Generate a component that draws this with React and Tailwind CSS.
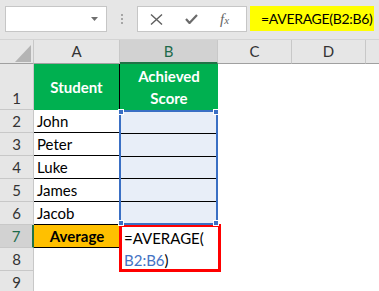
import React from "react";

const NAMES = ["John", "Peter", "Luke", "James", "Jacob"];
const HEADERS = ["A", "B", "C", "D"];

const headCell =
  "bg-[#e6e6e6] border-r border-b border-r-[#c8c8c8] border-b-[#a0a0a0] flex items-center justify-center text-[15px] text-[#333]";

const rowHead =
  "col-start-1 bg-[#e6e6e6] border-r border-b border-[#c8c8c8] flex items-end justify-center pb-[1px] text-[15px] text-[#333] leading-[20px]";

function Handle({ pos }) {
  return <span className={`absolute w-[6px] h-[6px] bg-[#3a6fc4] border border-white ${pos}`} />;
}

export default function App() {
  return (
    <div className="w-[379px] h-[291px] overflow-hidden bg-white font-['Lato',sans-serif]">
      {/* formula bar */}
      <div className="h-10 bg-[#e6e6e6] flex items-start pt-[6px] pl-[5px] border-b border-[#d4d4d4]">
        <div className="w-[102px] h-[26px] bg-white border border-[#c6c6c6] flex items-center justify-end pr-[8px]">
          <svg width="7" height="4" viewBox="0 0 7 4">
            <path d="M0 0h7L3.5 4z" fill="#6f6f6f" />
          </svg>
        </div>
        <div className="w-[30px] h-[26px] flex flex-col items-center justify-center gap-[2px]">
          <span className="w-[2px] h-[2px] bg-[#a6a6a6]" />
          <span className="w-[2px] h-[2px] bg-[#a6a6a6]" />
          <span className="w-[2px] h-[2px] bg-[#a6a6a6]" />
        </div>
        <div className="w-[110px] h-[26px] bg-white border border-[#c6c6c6] flex items-center pl-[12px] gap-[22px]">
          <svg width="13" height="11" viewBox="0 0 13 11">
            <path d="M1 0.5l11 10M12 0.5l-11 10" stroke="#5f5f5f" strokeWidth="1.4" fill="none" />
          </svg>
          <svg width="13" height="10" viewBox="0 0 13 10">
            <path d="M1 5l3.5 4L12 1" stroke="#6b6b6b" strokeWidth="2.2" fill="none" />
          </svg>
          <span className="font-['Liberation_Serif',serif] italic text-[15px] text-[#666] leading-none">
            f<span className="text-[11px]">x</span>
          </span>
        </div>
        <div className="ml-[3px] w-[124px] h-[25px] bg-[#ffff00] flex items-center pl-[11px] text-[14px] tracking-[-0.3px] whitespace-nowrap text-black">
          =AVERAGE(B2:B6)
        </div>
      </div>

      {/* sheet */}
      <div className="grid grid-cols-[34px_86px_98px_74px_74px_13px] grid-rows-[24px_46px_repeat(8,23px)]">
        {/* corner */}
        <div className="bg-[#e6e6e6] border-r border-b border-r-[#c8c8c8] border-b-[#a0a0a0] relative">
          <svg className="absolute left-[15px] top-[5px]" width="16" height="17" viewBox="0 0 16 17">
            <path d="M16 0v17H0z" fill="#b4b4b4" />
          </svg>
        </div>
        {HEADERS.map((h) =>
          h === "B" ? (
            <div
              key={h}
              className="bg-[#d2d2d2] border-r border-r-[#c8c8c8] border-b-2 border-b-[#217346] flex items-center justify-center text-[15px] text-[#1d6a4a]"
            >
              {h}
            </div>
          ) : (
            <div key={h} className={headCell}>
              {h}
            </div>
          )
        )}
        <div className="bg-[#e6e6e6] border-b border-b-[#a0a0a0]" />

        {/* row headers */}
        {[1, 2, 3, 4, 5, 6, 7, 8, 9].map((n) =>
          n === 7 ? (
            <div
              key={n}
              className="col-start-1 row-start-8 bg-[#d2d2d2] border-r-2 border-r-[#217346] border-b border-b-[#c8c8c8] flex items-end justify-center pb-[1px] text-[15px] text-[#1d6a4a] leading-[20px]"
            >
              7
            </div>
          ) : (
            <div key={n} className={rowHead} style={{ gridRowStart: n + 1 }}>
              {n}
            </div>
          )
        )}

        {/* row 1 */}
        <div className="col-start-2 row-start-2 bg-[#00b050] border-r border-black flex items-center justify-center text-white font-bold text-[15px]">
          Student
        </div>
        <div className="col-start-3 row-start-2 bg-[#00b050] flex items-center justify-center text-center text-white font-bold text-[15px] leading-[22px]">
          Achieved
          <br />
          Score
        </div>

        {/* names */}
        {NAMES.map((name, i) => (
          <div
            key={name}
            className="col-start-2 border-b border-r border-black flex items-center pl-[3px] text-[15px] text-black"
            style={{ gridRowStart: i + 3 }}
          >
            {name}
          </div>
        ))}

        {/* selection B2:B6 */}
        <div className="col-start-3 row-start-3 row-span-5 relative -ml-px border-2 border-[#3a6fc4] bg-[#e8eef8] flex flex-col">
          {[0, 1, 2, 3, 4].map((i) => (
            <div key={i} className={i < 4 ? "flex-1 border-b border-black" : "flex-1"} />
          ))}
          <Handle pos="-top-[3px] -left-[3px]" />
          <Handle pos="-top-[3px] -right-[3px]" />
          <Handle pos="-bottom-[3px] -left-[3px]" />
          <Handle pos="-bottom-[3px] -right-[3px]" />
        </div>

        {/* row 7 */}
        <div className="col-start-2 row-start-8 bg-[#ffc000] border-b border-black flex items-center justify-center font-bold text-[15px] text-black">
          Average
        </div>
        <div className="col-start-3 row-start-8 row-span-2 -ml-px -mr-[3px] -mt-px -mb-px border-[3px] border-[#ff0000] bg-white pl-[2px] text-[15px] leading-[22px] text-black">
          =AVERAGE(
          <br />
          <span className="text-[#4472c4]">B2:B6</span>)
        </div>
      </div>
    </div>
  );
}
